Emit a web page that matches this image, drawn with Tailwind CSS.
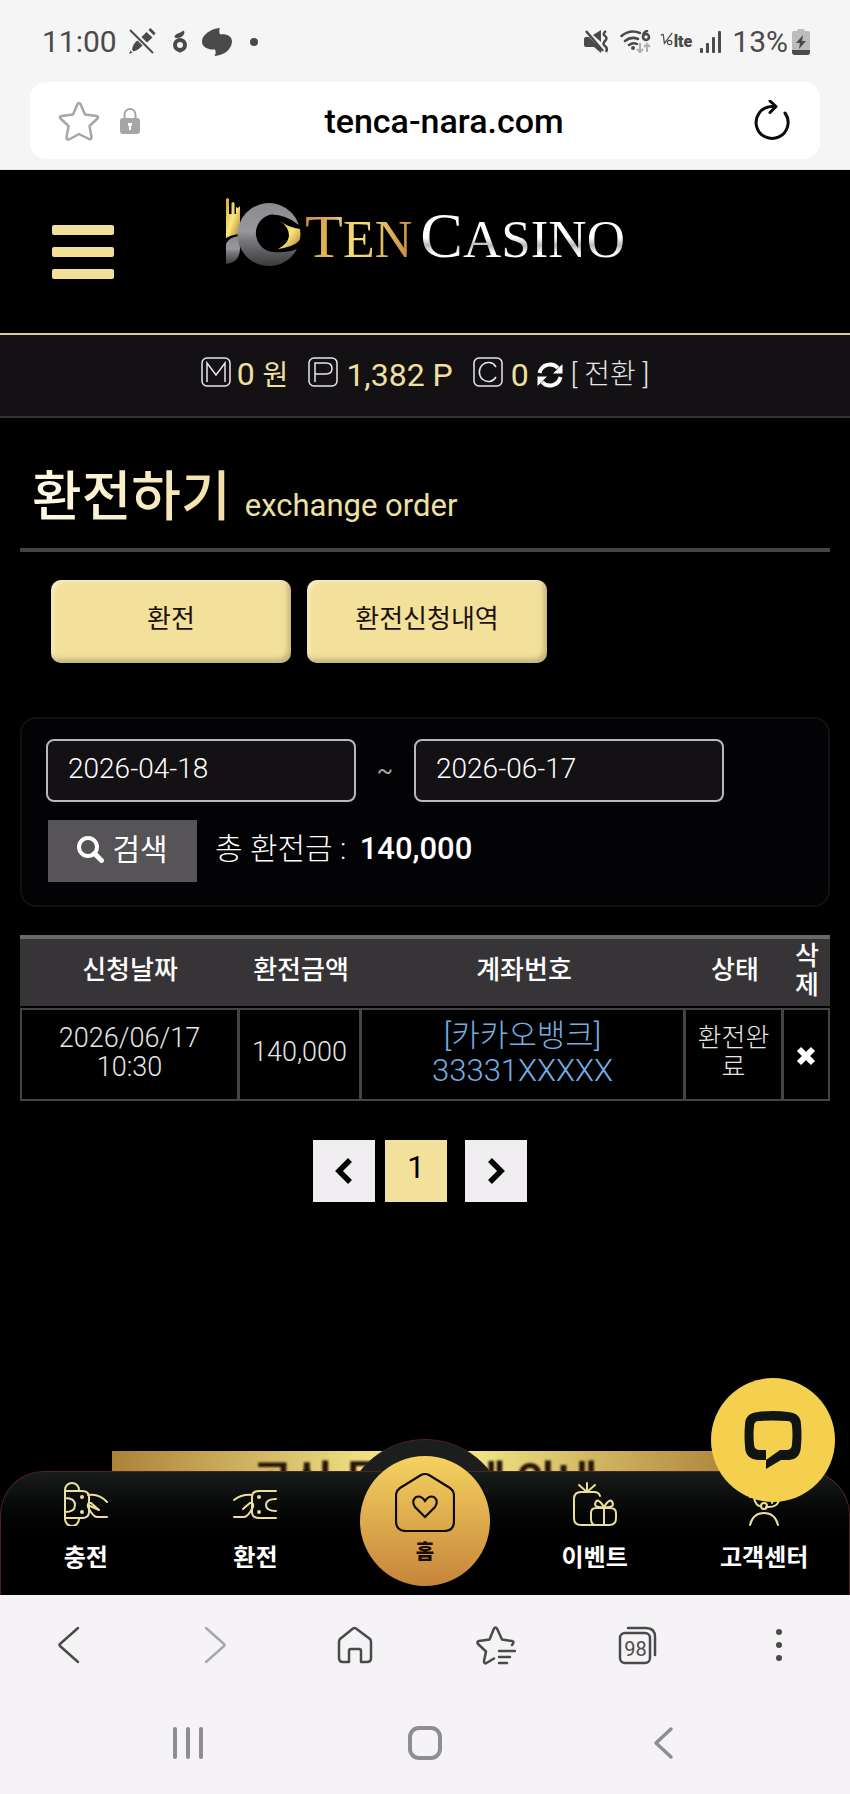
<!DOCTYPE html>
<html lang="ko">
<head>
  <meta charset="UTF-8">
  <meta name="viewport" content="width=device-width, initial-scale=1.0">
  <title>환전하기 - TEN CASINO</title>
  <script src="https://cdn.jsdelivr.net/npm/@tailwindcss/browser@4"></script>
</head>
<body class="min-h-screen flex flex-col bg-black text-white font-[Roboto,'Noto_Sans_CJK_KR',sans-serif]">

  <!-- Status bar -->
  <div class="bg-[#f5f5f5] text-[#4a4a4a] border-b border-[#e4e4e4] pt-5 pb-2.5">
    <div class="flex justify-between items-center h-11 pl-10.5 pr-10">
      <div class="flex items-center">
        <span class="text-[30px] leading-11 w-[86px]">11:00</span>
        <svg class="w-7 h-7" viewBox="0 0 28 28">
          <g fill="#4a4a4a">
            <path d="M1 26l1.500-3.500 2 2zM4 21.500c.5-4 3-7.500 6-9.500l5 5c-3 3.500-6 5.500-9.500 6.500zM13.500 9l5-5 6 5.500-5.500 5zM20.500 2l2-2 5 5-1.500 2.500z"/>
          </g>
          <path d="M2 2l23 23" stroke="#f5f5f5" stroke-width="4"/>
          <path d="M2 2l23 23" stroke="#4a4a4a" stroke-width="2"/>
        </svg>
        <svg class="w-4 h-6 ml-4" viewBox="0 0 16 24">
          <path d="M3 5.500C5 3 8 3 10 1.500 12-.5 13 2 12 4 11 6.500 8 8 5.500 8 2.500 8 2 7 3 5.500z" fill="#4a4a4a"/>
          <circle cx="8" cy="15" r="5" fill="none" stroke="#4a4a4a" stroke-width="4"/>
          <path d="M5 20h6l-3 3z" fill="#4a4a4a"/>
        </svg>
        <svg class="w-[30px] h-7 ml-3.5" viewBox="0 0 30 28">
          <path d="M18 0c-1 2-1 4 0 6.500 6-1 12 1.500 12 7C30 21 22 27.500 12.500 28c1.500-2.500 1.500-4.500.5-6.500C6 22 0 19 0 13.500 0 7 8 1 18 0z" fill="#4a4a4a"/>
        </svg>
        <span class="w-2 h-2 ml-4.5 rounded-full bg-[#4a4a4a]"></span>
      </div>
      <div class="flex items-center">
        <svg class="w-6 h-6" viewBox="0 0 24 24">
          <path d="M0 9q0-2 2-2h3L17 19v4l-7-6H2q-2 0-2-2zM9 5l8-5v12z" fill="#4a4a4a"/>
          <path d="M2 1l17 20" stroke="#4a4a4a" stroke-width="2.500"/>
          <path d="M22 1q-4 3-1 5t0 5 0 5 1 6" fill="none" stroke="#4a4a4a" stroke-width="2.500"/>
        </svg>
        <svg class="w-8 h-6 ml-3" viewBox="0 0 32 24">
          <g fill="none" stroke="#4a4a4a" stroke-width="2.500" stroke-linecap="round">
            <path d="M1.500 6Q10-1 20 3M5 11q6-5 13-2M9 15q4-3 8-1"/>
            <circle cx="26" cy="7" r="3"/>
            <path d="M27 1q-4 1-4 6"/>
          </g>
          <circle cx="13" cy="18" r="2" fill="#4a4a4a"/>
          <path d="M20 13v9m-3-3l3 3 3-3M27 22v-8m-3 3l3-3 3 3" fill="none" stroke="#b0b0b0" stroke-width="2"/>
        </svg>
        <span class="flex items-baseline ml-2 font-black">
          <svg class="w-3.5 h-4" viewBox="0 0 16 16" fill="none" stroke="#4a4a4a" stroke-width="1.400">
            <path d="M1 4q3-3 3 1l1 8L14 1"/>
            <circle cx="11" cy="12" r="2.500"/>
          </svg>
          <span class="text-base leading-6">lte</span>
        </span>
        <svg class="w-[22px] h-6 ml-2" viewBox="0 0 22 24" fill="#4a4a4a">
          <rect x="0" y="18" width="3" height="5" rx="1"/><rect x="6" y="13" width="3" height="10" rx="1"/>
          <rect x="12" y="7" width="3" height="16" rx="1"/><rect x="18" y="1" width="3" height="22" rx="1"/>
        </svg>
        <span class="text-[30px] leading-11 ml-2.5">13%</span>
        <svg class="w-[18px] h-[26px] ml-1" viewBox="0 0 18 26">
          <path d="M5 2q0-2 2-2h4q2 0 2 2h3q2 0 2 2v19q0 3-3 3H3q-3 0-3-3V4q0-2 2-2z" fill="#bcbcbc"/>
          <path d="M0 21h18v2q0 3-3 3H3q-3 0-3-3zM11 6L4 14h4l-1 6 7-8h-4z" fill="#4a4a4a"/>
        </svg>
      </div>
    </div>

    <!-- Address bar -->
    <div class="flex items-center justify-between mt-4.5 mx-7.5 h-[77px] pl-7 pr-7.5 rounded-2xl bg-white">
      <div class="flex items-center gap-5 w-[82px]">
        <button aria-label="즐겨찾기">
          <svg class="w-10.5 h-10.5" viewBox="0 0 42 42" fill="none" stroke="#a6a6a6" stroke-width="2.500" stroke-linejoin="round">
            <path d="M19.500 4q1.500-2 3 0l4.500 10.500 11.500 1.500q2.500.5 1 2.500L31.500 26l2 11q0 3-2.500 2L21 34l-10 5.500q-2.500.5-2.500-2l2-11.500-8-7.500q-1.500-2 1-2.500L15 14.500z"/>
          </svg>
        </button>
        <svg class="w-5 h-[26px] shrink-0" viewBox="0 0 20 26">
          <path d="M4.500 11V6.500a5.500 5.500 0 0 1 11 0V11" fill="none" stroke="#a6a6a6" stroke-width="2"/>
          <rect x="0" y="10" width="20" height="16" rx="3" fill="#a6a6a6"/>
          <path d="M8 15h4v3h-1v4H9v-4H8z" fill="#fff"/>
        </svg>
      </div>
      <span class="text-[34px] leading-10 font-medium text-black">tenca-nara.com</span>
      <button class="w-10.5 flex justify-end" aria-label="새로고침">
        <svg class="w-9 h-[42px]" viewBox="0 0 36 42" fill="none" stroke="#0a0a0a" stroke-width="3" stroke-linecap="round" stroke-linejoin="round">
          <path d="M31 13A16 16 0 1 1 17 6.500h5M16 1l6 5.500-6 6"/>
        </svg>
      </button>
    </div>
  </div>

  <!-- Site header -->
  <header class="relative flex justify-center h-[165px] pt-7 border-b-2 border-[#d9cb95]">
    <button class="absolute left-[52px] top-[55px] flex flex-col gap-3" aria-label="메뉴">
      <span class="block w-[62px] h-2.5 rounded-xs bg-[#f3e097]"></span>
      <span class="block w-[62px] h-2.5 rounded-xs bg-[#f3e097]"></span>
      <span class="block w-[62px] h-2.5 rounded-xs bg-[#f3e097]"></span>
    </button>
    <a href="#" class="flex items-start h-[70px] font-['Liberation_Serif',serif]">
      <svg class="w-[76px] h-[70px]" viewBox="0 0 76 70">
        <defs>
          <linearGradient id="silver" x1="0" y1="0" x2="0" y2="1">
            <stop offset="0" stop-color="#8b8b8f"/><stop offset=".45" stop-color="#98989c"/><stop offset=".6" stop-color="#77777b"/><stop offset="1" stop-color="#3a3a3d"/>
          </linearGradient>
          <linearGradient id="gold" x1="0" y1="0" x2="1" y2="1">
            <stop offset="0" stop-color="#d9a637"/><stop offset=".5" stop-color="#f8e87c"/><stop offset="1" stop-color="#b17a2c"/>
          </linearGradient>
        </defs>
        <path d="M1 40V1l1.500-1L4 1v15h2.500V5L8 4l1.500 1v11H11V9l2 1 2-2v20l-2 8Q6 37 1 40z" fill="url(#gold)"/>
        <path d="M1 66V46Q4 39 14 38l1 12q0 15-14 16z" fill="url(#silver)"/>
        <path d="M74 27A31.500 31.500 0 1 0 72 51Q62 55 48 54A19 19 0 0 1 46 16.500Q60 16 74 27z" fill="url(#silver)"/>
        <path d="M54 22q10 8 21 9 1 5 0 10-3 7-22 10 10-5 11-13 0-9-10-16z" fill="url(#gold)"/>
      </svg>
      <span class="ml-1 text-[62px] leading-[76px] bg-linear-100 from-[#c98a3a] via-[#f5e27a] to-[#c58238] bg-clip-text text-transparent">T<span class="text-[52px]">EN</span></span>
      <span class="ml-2 text-[64px] leading-[76px] bg-linear-to-b from-white from-50% via-[#b9b9bd] via-60% to-white to-70% bg-clip-text text-transparent">C<span class="text-[53px]">ASINO</span></span>
    </a>
  </header>

  <!-- Balance -->
  <div class="flex justify-center items-center h-[83px] pb-0.5 bg-[#131113] border-b-2 border-[#333133] text-[32px] leading-10 text-[#eee0a0]">
    <svg class="w-[30px] h-[30px] mb-1.5" viewBox="0 0 30 30" fill="none" stroke="#e8e8ea" stroke-width="1.500">
      <rect x="1" y="1" width="28" height="28" rx="5"/><path d="M6 25V6l9 12 9-12v19"/>
    </svg>
    <span class="ml-1.5">0 <span class="text-[28px]">원</span></span>
    <svg class="w-[30px] h-[30px] ml-5 mb-1.5" viewBox="0 0 30 30" fill="none" stroke="#e8e8ea" stroke-width="1.500">
      <rect x="1" y="1" width="28" height="28" rx="5"/><path d="M7 25V6h11q6 0 6 5.500T18 17H7"/>
    </svg>
    <span class="ml-2">1,382 P</span>
    <svg class="w-[30px] h-[30px] ml-5 mb-1.5" viewBox="0 0 30 30" fill="none" stroke="#e8e8ea" stroke-width="1.500">
      <rect x="1" y="1" width="28" height="28" rx="5"/><path d="M23 10a9 9.500 0 1 0 0 10"/>
    </svg>
    <span class="ml-2">0</span>
    <button class="flex items-center ml-2 text-white" aria-label="전환">
      <svg class="w-[26px] h-[26px]" viewBox="0 0 26 26">
        <path d="M2.500 11A10.800 10.800 0 0 1 21 6M23.500 15A10.800 10.800 0 0 1 5 20" fill="none" stroke="#fff" stroke-width="4"/>
        <path d="M25.500 2v9.500H16zM.5 24v-9.500H10z" fill="#fff"/>
      </svg>
      <span class="ml-2 text-[28px] font-light text-[#e4e4e4]">[ 전환 ]</span>
    </button>
  </div>

  <main class="flex-1 flex flex-col px-5">
    <!-- Title -->
    <div class="flex items-baseline h-[134px] pt-10 pl-3 border-b-4 border-[#454345]">
      <h1 class="text-[54px] leading-20 font-medium bg-linear-to-r from-[#fffbe6] to-[#f3dfa6] bg-clip-text text-transparent">환전하기</h1>
      <span class="ml-3.5 text-[31px] leading-10 text-[#eee0a0]">exchange order</span>
    </div>

    <!-- Tabs -->
    <div class="flex gap-4 mt-7 ml-[31px] text-[26px] text-[#1b1310]">
      <button class="w-60 h-[83px] pb-1 rounded-[10px] bg-[#f3e09b] shadow-[inset_-3px_-4px_5px_#0003,inset_3px_2px_4px_#fff6]">환전</button>
      <button class="w-60 h-[83px] pb-1 rounded-[10px] bg-[#f3e09b] shadow-[inset_-3px_-4px_5px_#0003,inset_3px_2px_4px_#fff6]">환전신청내역</button>
    </div>

    <!-- Search -->
    <form class="mt-[54px] h-[190px] px-6 py-5 rounded-2xl border-2 border-[#111012] bg-[#030204]">
      <div class="flex items-center">
        <input type="text" value="2026-04-18" aria-label="시작일" class="w-[310px] h-[63px] px-5 pb-1 rounded-lg border-2 border-[#b9b8ba] bg-[#131114] text-[28px] font-light">
        <span class="w-[58px] text-center text-[24px] leading-8 text-[#a5a5a5]">~</span>
        <input type="text" value="2026-06-17" aria-label="종료일" class="w-[310px] h-[63px] px-5 pb-1 rounded-lg border-2 border-[#b9b8ba] bg-[#131114] text-[28px] font-light">
      </div>
      <div class="flex items-center mt-[18px]">
        <button type="button" class="flex items-center justify-center gap-2 w-[149px] h-[62px] ml-0.5 pb-1 bg-[#565456] text-[30px]">
          <svg class="w-[27px] h-[27px]" viewBox="0 0 27 27" fill="none" stroke="#fff">
            <circle cx="11" cy="11" r="9" stroke-width="4"/><path d="M17.500 17.500l7 7" stroke-width="5" stroke-linecap="round"/>
          </svg>
          검색
        </button>
        <p class="ml-4.5 pb-1 text-[30px] leading-10 font-light">총 환전금 : <span class="ml-1.5 text-[31px] font-medium">140,000</span></p>
      </div>
    </form>

    <!-- History -->
    <table class="w-full mt-7 table-fixed border-separate border-spacing-0 text-center text-[27px] leading-[29px]">
      <thead class="text-[26px]">
        <tr class="h-[73px] *:border-t-4 *:border-t-[#6a686a] *:border-b-2 *:border-b-black *:bg-[#363436] *:font-medium *:pb-1">
          <th class="w-[220px]">신청날짜</th>
          <th class="w-[122px]">환전금액</th>
          <th>계좌번호</th>
          <th class="w-[98px]">상태</th>
          <th class="w-[46px] px-2">삭제</th>
        </tr>
      </thead>
      <tbody class="font-light text-[#e6e6e6]">
        <tr class="h-[93px] *:border-y-2 *:border-r-3 *:last:border-r-2 *:border-[#454345]">
          <td class="border-l-2 px-8 pb-1">2026/06/17 10:30</td>
          <td class="pb-1">140,000</td>
          <td class="px-16 pb-1 text-[31px] leading-[35px] text-[#74aee3]">[카카오뱅크] 33331XXXXX</td>
          <td class="px-2 pb-1 text-[26px]">환전완료</td>
          <td>
            <button class="align-middle" aria-label="삭제">
              <svg class="w-5 h-5" viewBox="0 0 20 20"><path d="M3 3l14 14M17 3L3 17" stroke="#fff" stroke-width="6"/></svg>
            </button>
          </td>
        </tr>
      </tbody>
    </table>

    <!-- Paging -->
    <div class="flex justify-center mt-[39px] pr-2.5">
      <a href="#" class="flex items-center justify-center w-[62px] h-[62px] bg-[#efedf0]" aria-label="이전">
        <svg class="w-[18px] h-[26px]" viewBox="0 0 18 26"><path d="M15 2L4 13l11 11" fill="none" stroke="#000" stroke-width="5.500"/></svg>
      </a>
      <a href="#" class="flex items-center justify-center w-[62px] h-[62px] ml-2.5 pb-1.5 bg-[#f3e09b] text-[31px] text-black">1</a>
      <a href="#" class="flex items-center justify-center w-[62px] h-[62px] ml-4.5 bg-[#efedf0]" aria-label="다음">
        <svg class="w-[18px] h-[26px]" viewBox="0 0 18 26"><path d="M3 2l11 11L3 24" fill="none" stroke="#000" stroke-width="5.500"/></svg>
      </a>
    </div>

    <!-- Banner, slides under the bottom menu -->
    <div class="mt-auto mx-[92px] h-5 overflow-hidden bg-linear-to-r from-[#ac8239] via-[#fdf793] to-[#ac8239] text-center">
      <p class="text-[44px] leading-16 font-bold text-[#241407] blur-[1px]">공식 등록업체 안내</p>
    </div>
  </main>

  <!-- Bottom menu -->
  <nav class="relative h-[124px]">
    <div class="absolute inset-x-0 -top-8 h-16 overflow-hidden">
      <div class="mx-auto w-41 h-41 rounded-full border border-[#4a2326] bg-[#1c1e1e]"></div>
    </div>
    <div class="relative grid grid-cols-5 h-full rounded-t-[44px] border-x border-t border-[#4a2326] bg-linear-to-b from-[#1a1c1c] to-black to-70% text-[24px] leading-8 font-bold">
      <a href="#" class="flex flex-col items-center pt-2.5">
        <svg class="w-11 h-11" viewBox="0 0 44 44" fill="none" stroke="#ecdf9b" stroke-width="2" stroke-linecap="round">
          <path d="M1 8a7 7 0 0 1 14 0v1M1 8v29a7 7 0 0 0 14 0v-1M1 9h17q7 0 7 6v15q0 6-7 6H1M1 16q10 0 10 7t-10 7M24 13q11-2 19 7M26 24l9 4M43 35H33q-4 0-9-10-1-5 3-4l8 7"/>
          <circle cx="18" cy="15" r="1"/><circle cx="18" cy="30" r="1"/>
        </svg>
        <span class="mt-4">충전</span>
      </a>
      <a href="#" class="flex flex-col items-center pt-2.5">
        <svg class="w-11 h-11" viewBox="0 0 44 44" fill="none" stroke="#ecdf9b" stroke-width="2" stroke-linecap="round">
          <path d="M43 9H26q-7 0-7 6v15q0 6 7 6h17M43 17q-10 0-10 6t10 6M1 18q8-6 18-5M1 35h10q4 0 9-10 1-5-3-4l-7 6"/>
          <circle cx="26" cy="15" r="1"/><circle cx="26" cy="30" r="1"/>
        </svg>
        <span class="mt-4">환전</span>
      </a>
      <a href="#" class="absolute left-1/2 -top-4 flex flex-col items-center w-[130px] h-[130px] pt-4 -translate-x-1/2 rounded-full bg-linear-to-b from-[#f5d260] to-[#c5853a] text-[20px] font-black text-[#190d05] shadow-[0_0_0_16px_#0c0d0d]/0">
        <svg class="w-15 h-15" viewBox="0 0 60 60" fill="none" stroke="#0d0905" stroke-width="2.200">
          <path d="M26 3q4-2 8 0l21 13q4 3 4 7v26q0 10-10 10H11Q1 59 1 49V23q0-4 4-7z"/>
          <path d="M30 45L20 35q-4-6 1-10 5-2 9 4 4-6 9-4 5 4 1 10z"/>
        </svg>
        <span class="mt-1">홈</span>
      </a>
      <a href="#" class="col-start-4 flex flex-col items-center pt-2.5">
        <svg class="w-11 h-11" viewBox="0 0 44 44" fill="none" stroke="#ecdf9b" stroke-width="2" stroke-linecap="round">
          <path d="M27 14q-1-4-6-4H8q-7 0-7 7v19q0 7 7 7h28q7 0 7-7v-5q0-5-6-5H23q-5 0-5 5v6q0 6 5 6M14 1v9M6 3l8 7 8-7M31 26v17M31 25q-9 1-9-3 2-8 9 3zM31 25q9 1 9-3-2-8-9 3z"/>
        </svg>
        <span class="mt-4">이벤트</span>
      </a>
      <a href="#" class="flex flex-col items-center pt-2.5">
        <svg class="w-11 h-11" viewBox="0 0 44 44" fill="none" stroke="#ecdf9b" stroke-width="2" stroke-linecap="round">
          <path d="M8 43q3-12 14-12t14 12M12 16q2 8 6 8M37 16q0 10-13 9M8 15q0-13 14-13t15 13M31 17l-1 4"/>
          <circle cx="22" cy="24" r="3"/>
        </svg>
        <span class="mt-4">고객센터</span>
      </a>
    </div>
    <button class="absolute right-[15px] -top-[93px] flex items-center justify-center w-31 h-31 rounded-full bg-[#f4d04e]" aria-label="상담">
      <svg class="w-[58px] h-[58px]" viewBox="0 0 58 58">
        <path d="M14 1Q29-1 44 1 57 2 57 14q1 10 0 20 0 14-12 15h-8l-15 9V49h-8Q1 48 1 35 0 24 1 14 1 2 14 1z" fill="#111511"/>
        <path d="M15 10q14-1 28 0 5 0 5 5 1 8 0 18 0 6-6 6h-6l-14 10V39h-6q-6 0-6-6-1-9 0-18 0-5 5-5z" fill="#f4d04e"/>
      </svg>
    </button>
  </nav>

  <!-- Browser toolbar -->
  <div class="h-[199px] bg-[#f5f3f6]">
    <div class="grid grid-cols-6 items-center justify-items-center h-[100px]">
      <button aria-label="뒤로"><svg class="w-10 h-10" viewBox="0 0 40 40" fill="none" stroke="#4a4a4a" stroke-width="2.500" stroke-linecap="round" stroke-linejoin="round"><path d="M27 3L9 19q-1 1 0 2l18 16"/></svg></button>
      <button aria-label="앞으로"><svg class="w-10 h-10" viewBox="0 0 40 40" fill="none" stroke="#a8a7a9" stroke-width="2.500" stroke-linecap="round" stroke-linejoin="round"><path d="M14 3l18 16q1 1 0 2L14 37"/></svg></button>
      <button aria-label="홈페이지"><svg class="w-10 h-10" viewBox="0 0 40 40" fill="none" stroke="#4a4a4a" stroke-width="2.500" stroke-linejoin="round"><path d="M19 3.500q1.500-1 3 0L36 14q1 1 1 3v16q0 4-4 4h-6V26q0-2-2-2h-8q-2 0-2 2v11H9q-4 0-4-4V17q0-2 1-3z"/></svg></button>
      <button aria-label="북마크"><svg class="w-10 h-10" viewBox="0 0 40 40" fill="none" stroke="#4a4a4a" stroke-width="2.500" stroke-linecap="round" stroke-linejoin="round"><path d="M36 20q3-3 0-4l-10-1.500-5-11q-1.500-2-3 0l-4.500 11L3 16q-2.500 1-1 3l8 7.500L8 36q0 3 2.500 2L18 33.500M23 26h16M23 32h11M23 38h8"/></svg></button>
      <button class="relative w-10 h-10 text-[20px] leading-10 text-[#4a4a4a]" aria-label="탭 98">
        <svg class="absolute inset-0 w-10 h-10" viewBox="0 0 40 40" fill="none" stroke="#4a4a4a" stroke-width="2.500" stroke-linecap="round"><rect x="3" y="8" width="30" height="30" rx="5"/><path d="M11 3h18q9 0 9 9v18"/></svg>
        <span class="relative block w-9 pt-1">98</span>
      </button>
      <button aria-label="더보기"><svg class="w-10 h-10" viewBox="0 0 40 40" fill="#4a4a4a"><circle cx="20" cy="7" r="3"/><circle cx="20" cy="20" r="3"/><circle cx="20" cy="33" r="3"/></svg></button>
    </div>
    <div class="grid grid-cols-3 items-center justify-items-center h-24 px-[8%]">
      <button aria-label="최근 앱"><svg class="w-9 h-9" viewBox="0 0 36 36" stroke="#8e8d8f" stroke-width="4" stroke-linecap="round"><path d="M6 4v28M19 4v28M32 4v28"/></svg></button>
      <button aria-label="홈 화면"><svg class="w-9 h-9" viewBox="0 0 36 36" fill="none" stroke="#8e8d8f" stroke-width="4"><rect x="3" y="3" width="30" height="30" rx="9"/></svg></button>
      <button aria-label="이전 화면"><svg class="w-9 h-9" viewBox="0 0 36 36" fill="none" stroke="#8e8d8f" stroke-width="3.500" stroke-linecap="round" stroke-linejoin="round"><path d="M26 4L11 18l15 14"/></svg></button>
    </div>
  </div>
</body>
</html>
